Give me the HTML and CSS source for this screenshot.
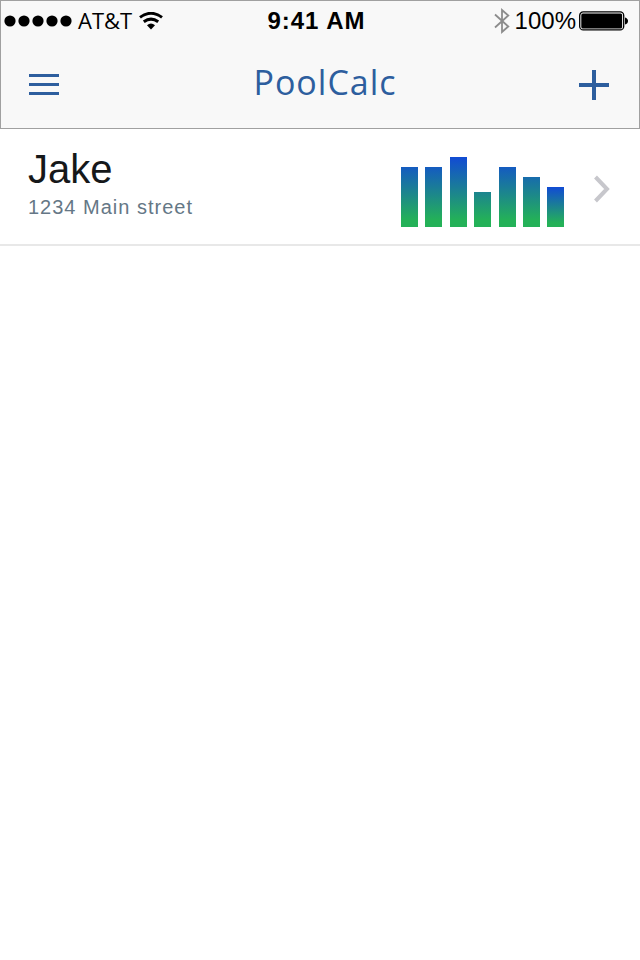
FILE: index.html
```html
<!DOCTYPE html>
<html lang="en">
<head>
<meta charset="utf-8">
<meta name="viewport" content="width=device-width, initial-scale=1">
<title>PoolCalc</title>
<link rel="stylesheet" href="styles.css">
</head>
<body>
<header class="header">
  <div class="status">
    <div class="status-side">
      <svg class="signal" width="68" height="12" viewBox="0 0 68 12" aria-hidden="true">
        <circle cx="6" cy="6" r="5.6"/><circle cx="20" cy="6" r="5.6"/><circle cx="34" cy="6" r="5.6"/><circle cx="48" cy="6" r="5.6"/><circle cx="62" cy="6" r="5.6"/>
      </svg>
      <span class="carrier">AT&amp;T</span>
      <svg width="24" height="18" viewBox="0 0 24 18" aria-hidden="true">
        <path d="M1 5.4Q12-2.8 23 5.4" fill="none" stroke="#000" stroke-width="3"/>
        <path d="M4.8 9.8Q12 4.4 19.2 9.8" fill="none" stroke="#000" stroke-width="3"/>
        <path d="M8 13.2Q12 10 16 13.2L12 17.4Z"/>
      </svg>
    </div>
    <time class="clock">9:41 AM</time>
    <div class="status-side status-right">
      <svg width="16" height="26" viewBox="0 0 16 26" fill="none" stroke="#8c8c8c" stroke-width="1.8" aria-hidden="true">
        <path d="M1 6.5L14.3 18.5L8 24V2L14.3 7.5L1 19.5"/>
      </svg>
      <span class="percent">100%</span>
      <svg width="50" height="20" viewBox="0 0 50 20" aria-hidden="true">
        <rect x="0.7" y="0.9" width="44" height="18" rx="3.5" fill="none" stroke="#000" stroke-width="1.3"/>
        <rect x="2.3" y="2.6" width="40.8" height="14.8" rx="1.5"/>
        <path d="M46 6.5Q49 7.5 49 10T46 13.5Z"/>
      </svg>
    </div>
  </div>
  <nav class="navbar">
    <button class="icon-button" type="button" aria-label="Menu">
      <svg width="30" height="22" viewBox="0 0 30 22" fill="#2d5e9e" aria-hidden="true">
        <rect width="30" height="3"/><rect y="9" width="30" height="3"/><rect y="18" width="30" height="3"/>
      </svg>
    </button>
    <h1 class="title">PoolCalc</h1>
    <button class="icon-button" type="button" aria-label="Add pool">
      <svg width="30" height="30" viewBox="0 0 30 30" fill="#2d5e9e" aria-hidden="true">
        <rect y="13" width="30" height="4"/><rect x="13" width="4" height="30"/>
      </svg>
    </button>
  </nav>
</header>
<main>
  <ul class="pools">
    <li>
      <a class="pool" href="#jake">
        <span class="details">
          <span class="name">Jake</span>
          <span class="address">1234 Main street</span>
        </span>
        <svg class="chart" width="163" height="70" viewBox="0 0 163 70" role="img" aria-label="Weekly readings">
          <defs>
            <linearGradient id="level" gradientUnits="userSpaceOnUse" x1="0" y1="0" x2="0" y2="70">
              <stop offset="0" stop-color="#114bd4"/><stop offset="0.9" stop-color="#24b158"/>
            </linearGradient>
            <linearGradient id="today" x1="0" y1="0" x2="0" y2="1">
              <stop offset="0" stop-color="#114bd4"/><stop offset="0.9" stop-color="#24b158"/>
            </linearGradient>
          </defs>
          <g fill="url(#level)">
            <rect x="0" y="10" width="17" height="60"/>
            <rect x="24" y="10" width="17" height="60"/>
            <rect x="49" y="0" width="17" height="70"/>
            <rect x="73" y="35" width="17" height="35"/>
            <rect x="98" y="10" width="17" height="60"/>
            <rect x="122" y="20" width="17" height="50"/>
          </g>
          <rect x="146" y="30" width="17" height="40" fill="url(#today)"/>
        </svg>
        <svg class="chevron" width="16" height="28" viewBox="0 0 16 28" fill="none" stroke="#c7c7cc" stroke-width="4" aria-hidden="true">
          <path d="M1.5 2L13 14L1.5 26"/>
        </svg>
      </a>
    </li>
  </ul>
</main>
</body>
</html>
```
FILE: styles.css
```css
* {
  box-sizing: border-box;
}

body {
  margin: 0;
  background: #fff;
  color: #000;
  font-family: "Liberation Sans", Arial, sans-serif;
}

svg {
  display: block;
  flex: none;
}

.header {
  border: 1px solid #a0a0a0;
  background: #f8f8f8;
}

.status {
  display: grid;
  grid-template-columns: 1fr auto 1fr;
  align-items: center;
  height: 40px;
  padding: 0 10px 0 3px;
  line-height: 40px;
}

.status-side {
  display: flex;
  align-items: center;
}

.status-right {
  justify-content: flex-end;
}

.carrier {
  margin: 0 7px 0 6px;
  padding-bottom: 2px;
  font-family: "Open Sans", sans-serif;
  font-size: 22px;
  line-height: 38px;
}

.clock {
  font-size: 24px;
  font-weight: 700;
  letter-spacing: 1px;
}

.percent {
  margin: 0 3px 0 5px;
  font-size: 24px;
}

.navbar {
  display: flex;
  align-items: center;
  justify-content: space-between;
  height: 87px;
  padding: 0 30px 0 28px;
}

.icon-button {
  display: flex;
  align-items: center;
  height: 44px;
  padding: 0;
  border: 0;
  background: none;
  cursor: pointer;
}

.title {
  margin: 0;
  padding: 0 0 6px 12px;
  color: #2d5e9e;
  font-family: "Open Sans", sans-serif;
  font-size: 34px;
  font-weight: 400;
  letter-spacing: 1px;
  line-height: 44px;
}

.pools {
  margin: 0;
  padding: 0;
  list-style: none;
}

.pool {
  display: flex;
  align-items: center;
  height: 117px;
  padding: 4px 30px 0 28px;
  border-bottom: 2px solid #e8e8e8;
  color: inherit;
  text-decoration: none;
}

.details {
  display: flex;
  flex: 1;
  flex-direction: column;
  padding-bottom: 8px;
}

.name {
  color: #16181a;
  font-size: 40px;
  line-height: 44px;
}

.address {
  color: #657786;
  font-size: 20px;
  letter-spacing: 1px;
  line-height: 32px;
}

.chart {
  margin-top: 6px;
}

.chevron {
  margin-left: 30px;
}
```
